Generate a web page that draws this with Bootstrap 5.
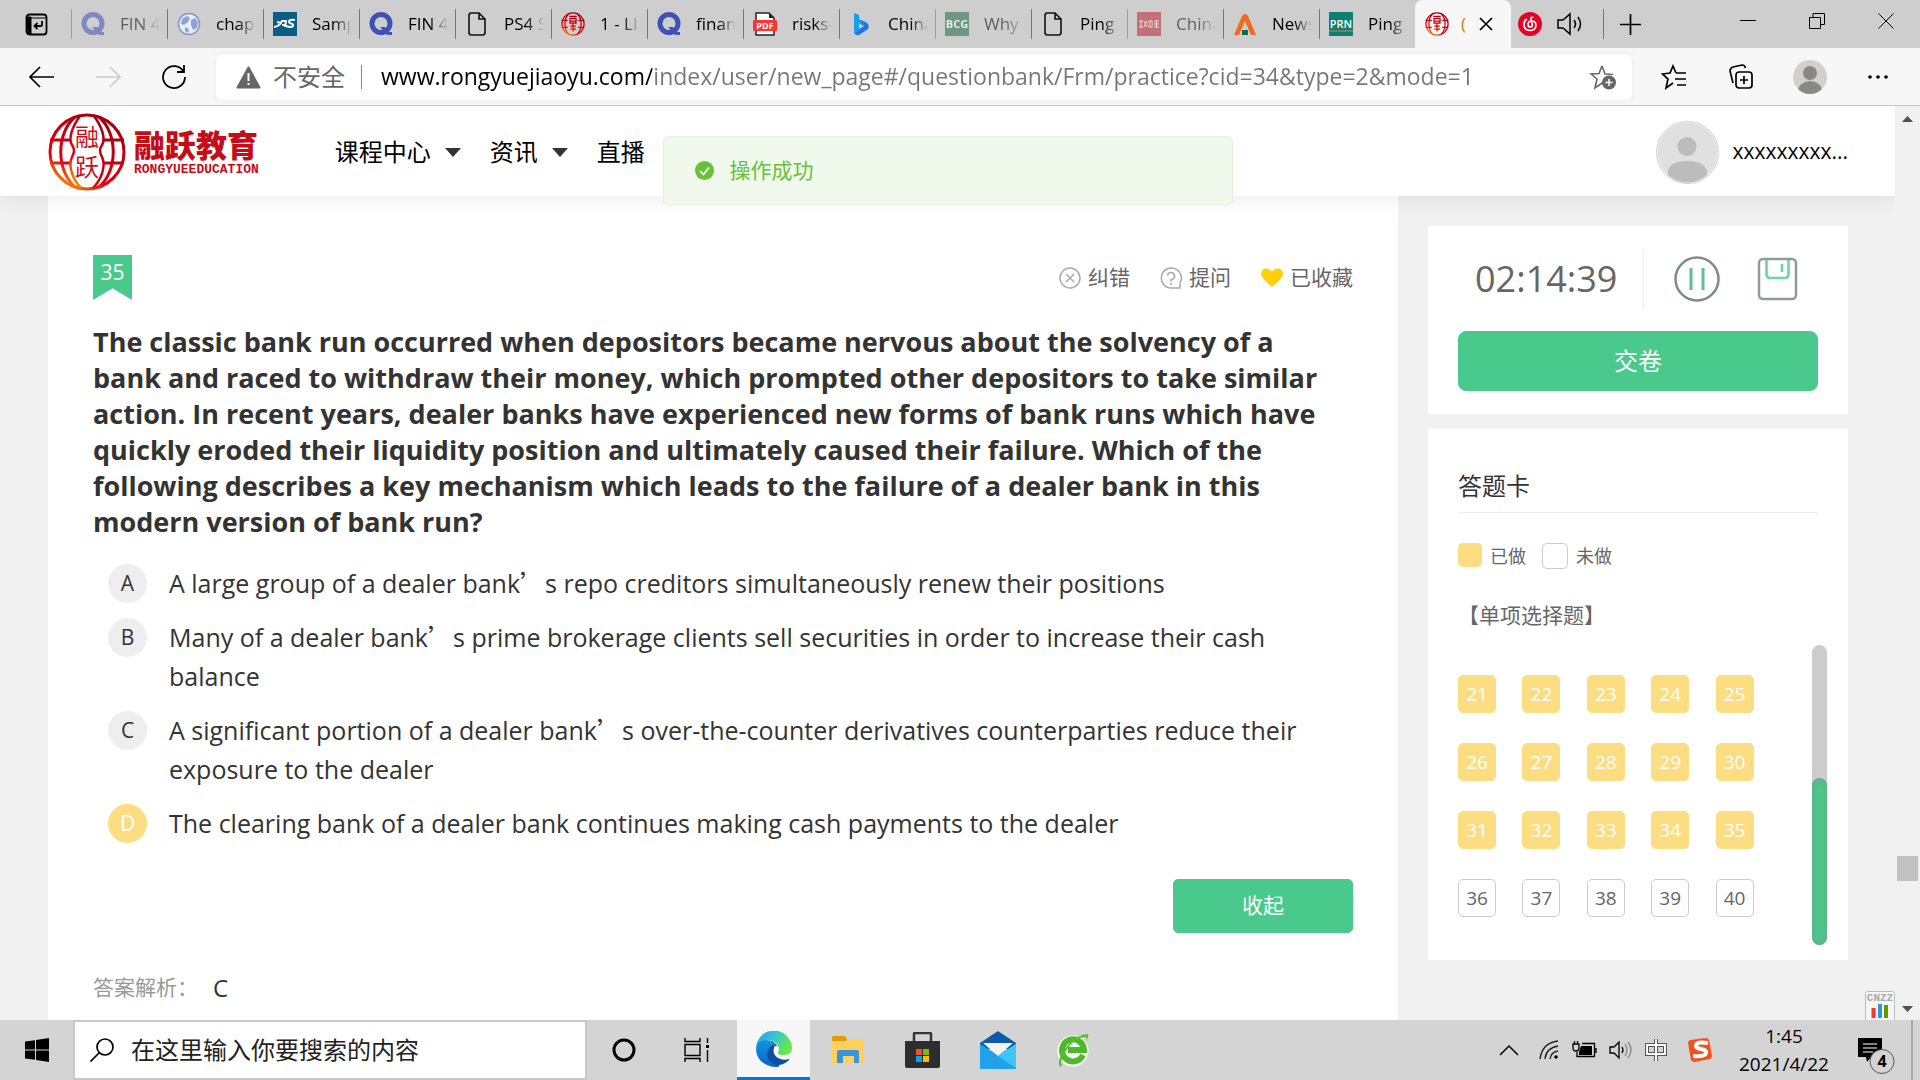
<!DOCTYPE html>
<html lang="zh-CN">
<head>
<meta charset="utf-8">
<meta name="viewport" content="width=device-width, initial-scale=1">
<title>融跃教育</title>
<link href="https://cdn.jsdelivr.net/npm/bootstrap@5.3.0/dist/css/bootstrap.min.css" rel="stylesheet">
<script src="https://cdn.jsdelivr.net/npm/bootstrap@5.3.0/dist/js/bootstrap.bundle.min.js"></script>
<style>
:root{--green:#49c98b;--yellow:#fcdd82;--ink:#333;--soft:#666}
body{font-family:"Open Sans","Noto Sans CJK SC",sans-serif;color:var(--ink);background:#f1f1f1;line-height:1.5}
a{color:inherit;text-decoration:none}
svg{display:block;flex:none}
.plain{background:none;border:0;padding:0;color:inherit;display:flex;align-items:center;justify-content:center}
/* browser chrome */
.tabstrip{height:48px;background:#cecece;color:#000;font-size:17px}
.tab-menu{width:71px;padding-left:25px}
.tab-item{width:96px;height:48px;padding-left:10px;gap:15px;position:relative;white-space:nowrap}
.tab-item::before{content:"";position:absolute;left:0;top:9px;width:1px;height:30px;background:#777}
.tab-title{width:40px;overflow:hidden;-webkit-mask-image:linear-gradient(90deg,#000 55%,transparent);mask-image:linear-gradient(90deg,#000 55%,transparent)}
.tab-item.dim{opacity:.55}
.tab-item.current{background:#f7f7f7;border-radius:8px 8px 0 0;gap:12px}
.tab-item.current::before,.tab-item.bare::before{display:none}
.tab-item.current .tab-title{width:6px;color:#c48200;-webkit-mask-image:none;mask-image:none}
.tab-item.bare{width:92px;padding-left:7px}
.new-tab{width:53px;height:30px;border-left:1px solid #777}
.win-btn{width:69px;height:42px}
.toolbar{height:58px;background:#f7f7f7;border-bottom:1px solid #c8c8c8;padding-left:27px;color:#000}
.nav-btn{width:66px;justify-content:flex-start}
.nav-btn.reload{width:57px}
.address{height:46px;background:#fff;border-radius:6px;box-shadow:0 0 6px rgba(0,0,0,.06);padding:0 15px 0 20px;font-size:24px;color:#666}
.address-sep{width:1px;height:24px;background:#888;margin:0 19px 0 16px}
.address input{border:0;outline:0;padding:0;font-size:23px;color:#000;background:linear-gradient(90deg,#000 271px,#767676 271px);-webkit-background-clip:text;background-clip:text;-webkit-text-fill-color:transparent}
.tools{width:288px;padding:0 31px 0 28px}
/* site */
.viewport{min-height:0;overflow:hidden}
.site-head{height:90px;background:#fff;box-shadow:0 4px 20px rgba(0,0,0,.07);padding:2px 47px 0 48px;z-index:2;color:#000}
.brand-name{font:900 31px/31px "Noto Sans CJK SC",sans-serif;color:#c60c18;margin-bottom:4px}
.brand-sub{font:bold 13px/13px "Liberation Mono",monospace;color:#c60c18}
.menu{font-size:24px;gap:29px;margin-left:76px}
.menu a{gap:14px}
.user-link{font-size:21px;gap:14px}
.site-body{padding:0 47px 0 48px}
.paper{background:#fff}
.question{padding:59px 45px 0}
.ribbon{width:39px;height:45px;background:var(--green);color:#fff;font-size:21px;line-height:34px;text-align:center;clip-path:polygon(0 0,100% 0,100% 100%,50% 74%,0 100%)}
.acts{gap:30px;font-size:21px;color:var(--soft)}
.acts button{gap:7px;line-height:45px}
.stem{font-size:27px;line-height:36px;font-weight:700;margin:24px 0 24px}
.choice{padding-left:15px;margin-bottom:15px;gap:22px;font-size:25px;line-height:39px;cursor:pointer}
.letter{width:39px;height:39px;border-radius:50%;background:#eee;font-size:21px;text-align:center;flex:none}
.btn-check:checked+.choice .letter{background:var(--yellow);color:#fff}
.apos{font-family:"Noto Sans CJK SC",sans-serif;line-height:24px}
.btn-go{--bs-btn-bg:var(--green);--bs-btn-color:#fff;--bs-btn-border-color:var(--green);--bs-btn-hover-bg:#3dbb7e;--bs-btn-hover-color:#fff;--bs-btn-padding-y:0}
.fold{width:180px;height:54px;font-size:21px;border-radius:5px;margin-top:21px}
.answer{margin-top:37px;font-size:21px;color:#999;gap:15px}
.answer b{font-weight:400;font-size:24px;color:var(--ink)}
.side{width:420px;margin-left:30px;padding-top:30px;gap:15px}
.timer-card{padding:23px 30px}
.clock{width:186px;height:60px;border-right:1px solid #eee;font-size:36px;line-height:60px;color:var(--soft);padding-left:17px;margin-right:30px}
.timer-tools{gap:37px}
.submit{height:60px;font-size:24px;border-radius:8px;margin-top:22px}
.sheet{padding:45px 30px 15px}
.sheet h2{font-size:24px;line-height:24px;font-weight:400;padding-bottom:14px;border-bottom:1px solid #eee;margin:0 0 30px}
.legend-row{font-size:18px;line-height:26px;color:var(--soft)}
.swatch{width:26px;height:26px;border-radius:5px;border:1px solid #ccc}
.swatch.done{width:24px;height:24px;background:var(--yellow);border:0}
.kind{font-size:21px;line-height:30px;color:var(--soft);margin:31px 0 15px}
.scroller{height:300px;margin-right:-9px}
.cells{display:grid;grid-template-columns:repeat(5,1fr);row-gap:30px;padding:30px 32px 0 0;align-content:start}
.cell{width:38px;height:38px;border-radius:5px;border:1px solid #ccc;background:#fff;color:var(--soft);font-size:19px;line-height:34px;padding:0}
.cell.done{background:var(--yellow);border-color:var(--yellow);color:#fff}
.track{width:15px;border-radius:8px;background:#ccc;padding-top:133px}
.track div{height:100%;border-radius:8px;background:var(--green);box-shadow:inset 0 0 8px rgba(130,150,140,.8)}
.toast-ok{top:30px;left:50%;transform:translateX(-50%);width:570px;height:69px;background:#f0f9eb;border:1px solid #e1f3d8;border-radius:6px;color:#67c23a;font-size:21px;padding-left:31px;gap:16px;z-index:5}
.cnzz{right:0;bottom:0}
.page-scroll{width:25px;background:#f1f1f1;padding:9px 2px 7px}
.thumb-slot{height:149px}
.page-thumb{height:25px;background:#c1c1c1}
/* taskbar */
.taskbar{height:60px;background:#d4d4d4;color:#000}
.start{width:73px}
.search-box{width:514px;background:#fff;border:2px solid #c9c9c9;padding-left:15px;gap:17px}
.search-box input{border:0;outline:0;font-size:24px;padding:0;width:400px;color:#222}
.search-box input::placeholder{color:#222;opacity:1}
.task{width:75px;height:60px}
.task.slim{width:73px}
.task.open{background:#f7f7f7;border-bottom:3px solid #0078d7;width:73px}
.tray{gap:12px}
.date{font-size:19px;line-height:28px;width:92px;margin-left:13px;text-align:center}
.show-desk{width:9px;height:60px;border-left:2px solid #aaa}
</style>
</head>
<body class="vh-100 d-flex flex-column overflow-hidden">
<svg width="0" height="0" class="position-absolute" aria-hidden="true">
  <defs>
    <linearGradient id="fire" x1="0" y1="1" x2=".6" y2="0"><stop offset="0" stop-color="#fc0"/><stop offset=".35" stop-color="#e60012"/><stop offset="1" stop-color="#a40010"/></linearGradient>
    <linearGradient id="bingG" x1="0" y1="0" x2="1" y2="1"><stop offset="0" stop-color="#1aa0f0"/><stop offset="1" stop-color="#1d5ee0"/></linearGradient>
    <linearGradient id="eA" x1="0" y1="0" x2="1" y2=".4"><stop offset="0" stop-color="#1fa7e4"/><stop offset=".5" stop-color="#33c3d5"/><stop offset="1" stop-color="#66e84a"/></linearGradient>
    <linearGradient id="eB" x1="0" y1="0" x2="0" y2="1"><stop offset="0" stop-color="#1296dd"/><stop offset="1" stop-color="#0a63c8"/></linearGradient>
  </defs>
  <symbol id="globe" viewBox="0 0 78 78">
    <g fill="none" stroke="url(#fire)" stroke-width="3">
      <circle cx="39" cy="39" r="37"/><path d="M27 4C8 20 8 58 27 74M51 4c19 16 19 54 0 70M2 27h20M2 50h20M56 27h20M56 50h20"/>
      <path d="M32 3C24 14 20 26 24 32q4 5 0 12c-4 8 0 22 9 31M46 3c8 11 12 23 8 29q-4 5 0 12c4 8 0 22-9 31" stroke-width="2.500"/>
    </g>
    <g fill="#c8101a" font-family="Noto Sans CJK SC" font-size="24" text-anchor="middle"><text x="39" y="33">融</text><text x="39" y="63">跃</text></g>
  </symbol>
  <symbol id="globe-s" viewBox="0 0 78 78">
    <g fill="none" stroke="url(#fire)" stroke-width="4">
      <circle cx="39" cy="39" r="36"/><path d="M27 4C8 20 8 58 27 74M51 4c19 16 19 54 0 70M2 27h20M2 50h20M56 27h20M56 50h20"/>
      <path d="M27 14h24M29 21h20v9H29zM27 36h24M39 36v28M30 46h18M29 56h20M30 30v8M48 30v8"/>
    </g>
  </symbol>
  <symbol id="quest" viewBox="0 0 24 24"><circle cx="12" cy="11.500" r="9" fill="none" stroke="#3f51b5" stroke-width="5"/><path d="M11 15h5l3 5h4v3h-5z" fill="#3f51b5"/></symbol>
  <symbol id="page" viewBox="0 0 24 24"><path d="M4 3.500Q4 1 6.500 1H14l6 6v13.500q0 2.500-2.500 2.500h-11Q4 23 4 20.500zM14 1v6h6" fill="none" stroke="#111" stroke-width="1.600"/></symbol>
</svg>

<header class="tabstrip d-flex align-items-center">
  <div class="tab-menu"><button class="plain" aria-label="标签页"><svg width="23" height="23" viewBox="0 0 23 23"><rect x="1.500" y="1.500" width="20" height="20" rx="3" fill="none" stroke="#000" stroke-width="1.800"/><path d="M1.500 5h20M2 4h4v17H3z" fill="#000" stroke="#000"/><path d="M17 8v4q0 1-1 1h-6M12.500 10L9.500 13l3 3" fill="none" stroke="#000" stroke-width="1.800"/></svg></button></div>
  <a href="#" class="tab-item d-flex align-items-center dim"><svg width="24" height="24"><use href="#quest"/></svg><span class="tab-title">FIN 4</span></a>
  <a href="#" class="tab-item d-flex align-items-center"><svg width="24" height="24"><circle cx="12" cy="12" r="10.500" fill="#e8edf8" stroke="#8497c9" stroke-width="1.500"/><path d="M5 7l5-3 3 2-2 4-4 3-3-1zM14 8l4-2 3 4-1 6-4 2-2-5zM8 15l4 2-1 4-3-2z" fill="#8da3d6"/></svg><span class="tab-title">chap4</span></a>
  <a href="#" class="tab-item d-flex align-items-center"><svg width="24" height="24"><path d="M0 0h24v24H0z" fill="#0b5d86"/><path d="M1 15q6-1 8-6h4l-1 6M9 13h4M22 8q-6-1-6 2c0 2 5 1 4 4q-2 2-7 0M4 10l4 1" fill="none" stroke="#fff" stroke-width="2"/></svg><span class="tab-title">Samp</span></a>
  <a href="#" class="tab-item d-flex align-items-center"><svg width="24" height="24"><use href="#quest"/></svg><span class="tab-title">FIN 4</span></a>
  <a href="#" class="tab-item d-flex align-items-center"><svg width="24" height="24"><use href="#page"/></svg><span class="tab-title">PS4 S</span></a>
  <a href="#" class="tab-item d-flex align-items-center"><svg width="24" height="24"><use href="#globe-s"/></svg><span class="tab-title">1 - LI</span></a>
  <a href="#" class="tab-item d-flex align-items-center"><svg width="24" height="24"><use href="#quest"/></svg><span class="tab-title">finan</span></a>
  <a href="#" class="tab-item d-flex align-items-center"><svg width="24" height="24"><path d="M3 1h13l5 5v17H3z" fill="#fff" stroke="#222" stroke-width="1.500"/><path d="M16 1v5h5z" fill="#222"/><rect x="0" y="8" width="24" height="11" rx="1" fill="#f33"/><text x="12" y="17" font-size="9" font-weight="700" fill="#fff" text-anchor="middle">PDF</text></svg><span class="tab-title">risks-</span></a>
  <a href="#" class="tab-item d-flex align-items-center"><svg width="24" height="24"><path d="M5 1l5 2v14l-5 4z" fill="#1b9df0"/><path d="M5 21l5-4 5-3-4-2-2-5 8 3q4 3 2 7l-9 6q-3 1-5-2z" fill="url(#bingG)"/></svg><span class="tab-title">China</span></a>
  <a href="#" class="tab-item d-flex align-items-center dim"><svg width="24" height="24"><path d="M0 0h24v24H0z" fill="#1f6b4b"/><text x="12" y="16" font-size="11" font-weight="700" fill="#fff" text-anchor="middle">BCG</text></svg><span class="tab-title">Why</span></a>
  <a href="#" class="tab-item d-flex align-items-center"><svg width="24" height="24"><use href="#page"/></svg><span class="tab-title">Ping</span></a>
  <a href="#" class="tab-item d-flex align-items-center dim"><svg width="24" height="24"><path d="M0 0h24v24H0z" fill="#c0232c"/><path d="M2 9h4M4 9v6M2 15h4M7 9l3 6M10 9l-3 6M12 9v6h3V9zM17 9h5M17 12h5M19.500 9v6M17 15h5" fill="none" stroke="#fff"/></svg><span class="tab-title">China</span></a>
  <a href="#" class="tab-item d-flex align-items-center"><svg width="24" height="24"><path d="M1 23L9 4q3-4 6 0l8 19h-5L12 9 6 23z" fill="#f26a1b"/><path d="M9 18h6v5H9z" fill="#0d6b4c"/></svg><span class="tab-title">News</span></a>
  <a href="#" class="tab-item d-flex align-items-center"><svg width="24" height="24"><path d="M0 0h24v24H0z" fill="#0d8074"/><text x="12" y="16" font-size="11" font-weight="600" fill="#fff" text-anchor="middle">PRN</text><path d="M0 19h24" stroke="#e67a43"/></svg><span class="tab-title">Ping</span></a>
  <a href="#" class="tab-item current d-flex align-items-center"><svg width="24" height="24"><use href="#globe-s"/></svg><span class="tab-title">(</span><svg width="14" height="14"><path d="M1 1l12 12M13 1L1 13" stroke="#000" stroke-width="1.700"/></svg></a>
  <a href="#" class="tab-item bare d-flex align-items-center"><svg width="24" height="24"><circle cx="12" cy="12" r="12" fill="#e60026"/><path d="M15.500 5.500q-3-1-2.500 2l1.300 5.500q.2 2-1.800 2-2.500 0-2.500-2.500Q10 9 13.500 9q4.500 0 4.500 4.500-.5 5-6 5Q6 18 6 12.500 6 8.500 9 7" fill="none" stroke="#fff" stroke-width="1.700"/></svg><svg width="26" height="24"><path d="M1 8h5l7-6v20l-7-6H1z" fill="none" stroke="#000" stroke-width="1.500"/><path d="M17 8q3 4 0 8M21 5q5 7 0 14" fill="none" stroke="#000" stroke-width="1.500"/></svg></a>
  <button class="plain new-tab" aria-label="新建标签页"><svg width="21" height="21"><path d="M10.500 0v21M0 10.500h21" stroke="#000" stroke-width="1.700"/></svg></button>
  <div class="d-flex ms-auto align-self-start">
    <button class="plain win-btn" aria-label="最小化"><svg width="16" height="16"><path d="M0 7.500h16" stroke="#000"/></svg></button>
    <button class="plain win-btn" aria-label="还原"><svg width="16" height="16"><path d="M.5 4.500h11v11H.5zM4 4.500V.5h11.500v11H12" fill="none" stroke="#000"/></svg></button>
    <button class="plain win-btn" aria-label="关闭"><svg width="16" height="16"><path d="M.5.5l15 15M15.500.5l-15 15" stroke="#000"/></svg></button>
  </div>
</header>

<div class="toolbar d-flex align-items-center">
  <button class="plain nav-btn" aria-label="后退"><svg width="28" height="24"><path d="M27 12H3M13 2L3 12l10 10" fill="none" stroke="#000" stroke-width="1.700"/></svg></button>
  <button class="plain nav-btn" aria-label="前进"><svg width="28" height="24"><path d="M3 12h24M17 2l10 10-10 10" fill="none" stroke="#ccc" stroke-width="1.700"/></svg></button>
  <button class="plain nav-btn reload" aria-label="刷新"><svg width="30" height="26"><path d="M24.500 7.500A11 11 0 1 0 26 13M25 1v7h-7" fill="none" stroke="#000" stroke-width="1.800"/></svg></button>
  <div class="address d-flex align-items-center flex-fill">
    <svg width="25" height="24" class="me-2"><path d="M12.500 2.500l11 20h-22z" fill="#666" stroke="#666" stroke-width="2" stroke-linejoin="round"/><path d="M12.500 8v8M12.500 18v2" stroke="#fff" stroke-width="2"/></svg>
    <label for="url" class="ms-1">不安全</label><span class="address-sep"></span>
    <input id="url" type="text" class="flex-fill" value="www.rongyuejiaoyu.com/index/user/new_page#/questionbank/Frm/practice?cid=34&amp;type=2&amp;mode=1">
    <button class="plain" aria-label="收藏此页"><svg width="28" height="26"><path d="M13 2l3 8 8 .5M17 22l-4-3-7 5 2-9-6-5 8-.5 3-7.500" fill="none" stroke="#666" stroke-width="1.600"/><circle cx="20" cy="18.500" r="7" fill="#666"/><path d="M20 15v7M16.500 18.500h7" stroke="#fff" stroke-width="1.500"/></svg></button>
  </div>
  <div class="tools d-flex align-items-center justify-content-between">
    <button class="plain" aria-label="收藏夹"><svg width="28" height="26"><path d="M16 9l-3-7-3 7-7.500 1 5.500 5-2 9 7-5M16 9h10M15 15h11M17 21h9" fill="none" stroke="#000" stroke-width="1.700"/></svg></button>
    <button class="plain" aria-label="集锦"><svg width="26" height="26"><rect x="8" y="8" width="16" height="16" rx="3" fill="none" stroke="#000" stroke-width="1.700"/><path d="M16 12v8M12 16h8M5 19L2 7q0-3 3-4l9-2q3 0 3.500 3" fill="none" stroke="#000" stroke-width="1.700"/></svg></button>
    <button class="plain" aria-label="用户"><svg width="34" height="34"><clipPath id="uc"><circle cx="17" cy="17" r="17"/></clipPath><g clip-path="url(#uc)"><path d="M0 0h34v34H0z" fill="#d2d0ce"/><circle cx="17" cy="13" r="7" fill="#8a8886"/><ellipse cx="17" cy="31" rx="12" ry="10" fill="#8a8886"/></g></svg></button>
    <button class="plain" aria-label="更多"><svg width="22" height="6"><circle cx="3" cy="3" r="1.800"/><circle cx="11" cy="3" r="1.800"/><circle cx="19" cy="3" r="1.800"/></svg></button>
  </div>
</div>

<div class="viewport d-flex flex-fill">
  <div class="flex-fill position-relative d-flex flex-column overflow-hidden">
    <nav class="site-head d-flex align-items-center flex-shrink-0 position-relative">
      <a href="#" class="d-flex align-items-center"><svg width="78" height="78"><use href="#globe"/></svg>
        <span class="ms-2 d-flex flex-column"><span class="brand-name">融跃教育</span><span class="brand-sub">RONGYUEEDUCATION</span></span></a>
      <div class="menu d-flex">
        <a href="#" class="d-flex align-items-center">课程中心<svg width="16" height="9"><path d="M0 0h16L8 9z" fill="#333"/></svg></a>
        <a href="#" class="d-flex align-items-center">资讯<svg width="16" height="9"><path d="M0 0h16L8 9z" fill="#333"/></svg></a>
        <a href="#">直播</a>
      </div>
      <a href="#" class="user-link d-flex align-items-center ms-auto"><svg width="63" height="63"><circle cx="31.500" cy="31.500" r="31" fill="#fff" stroke="#ccc"/><clipPath id="av"><circle cx="31.500" cy="31.500" r="30"/></clipPath><g clip-path="url(#av)"><path d="M0 0h63v63H0z" fill="#e0e0e0"/><circle cx="31" cy="25.500" r="9.500" fill="#bcbcbc"/><path d="M12 63V50q2-10 19-10t20 10v13z" fill="#bcbcbc"/></g></svg>xxxxxxxxx...</a>
    </nav>
    <main class="site-body d-flex flex-fill align-items-stretch">
      <section class="question paper flex-fill">
        <div class="d-flex justify-content-between align-items-start">
          <div class="ribbon">35</div>
          <div class="acts d-flex">
            <button class="plain"><svg width="22" height="22"><circle cx="11" cy="11" r="10" fill="none" stroke="#aaa" stroke-width="1.500"/><path d="M7 7l8 8M15 7l-8 8" stroke="#aaa" stroke-width="1.500"/></svg>纠错</button>
            <button class="plain"><svg width="22" height="22"><path d="M20 21h-9A10 10 0 1 1 20 16z" fill="none" stroke="#aaa" stroke-width="1.500"/><path d="M7.500 8.500Q8 5.500 11 5.500t3.500 3-3.500 4.500v1.500M11 16v2" fill="none" stroke="#aaa" stroke-width="1.700"/></svg>提问</button>
            <button class="plain"><svg width="22" height="22"><path d="M11 20Q0 11 0 7q0-5 5-5.500 4 0 6 3.500 2-3.500 6-3.500Q22 2 22 7q0 4-11 13z" fill="#fecf0a"/></svg>已收藏</button>
          </div>
        </div>
        <h1 class="stem">The classic bank run occurred when depositors became nervous about the solvency of a<br>bank and raced to withdraw their money, which prompted other depositors to take similar<br>action. In recent years, dealer banks have experienced new forms of bank runs which have<br>quickly eroded their liquidity position and ultimately caused their failure. Which of the<br>following describes a key mechanism which leads to the failure of a dealer bank in this<br>modern version of bank run?</h1>
        <input class="btn-check" type="radio" name="q35" id="oa"><label class="choice d-flex" for="oa"><span class="letter">A</span><span>A large group of a dealer bank<span class="apos">’</span>s repo creditors simultaneously renew their positions</span></label>
        <input class="btn-check" type="radio" name="q35" id="ob"><label class="choice d-flex" for="ob"><span class="letter">B</span><span>Many of a dealer bank<span class="apos">’</span>s prime brokerage clients sell securities in order to increase their cash<br>balance</span></label>
        <input class="btn-check" type="radio" name="q35" id="oc"><label class="choice d-flex" for="oc"><span class="letter">C</span><span>A significant portion of a dealer bank<span class="apos">’</span>s over-the-counter derivatives counterparties reduce their<br>exposure to the dealer</span></label>
        <input class="btn-check" type="radio" name="q35" id="od" checked><label class="choice d-flex" for="od"><span class="letter">D</span><span>The clearing bank of a dealer bank continues making cash payments to the dealer</span></label>
        <div class="text-end"><button class="btn btn-go fold">收起</button></div>
        <div class="answer d-flex align-items-center"><span>答案解析：</span><b>C</b></div>
      </section>
      <aside class="side d-flex flex-column flex-shrink-0">
        <div class="timer-card paper">
          <div class="d-flex align-items-center"><div class="clock">02:14:39</div>
            <div class="timer-tools d-flex align-items-center">
            <button class="plain" aria-label="暂停"><svg width="46" height="46"><circle cx="23" cy="23" r="21.500" fill="none" stroke="#7f8c86" stroke-width="2.500"/><path d="M17 12v22M29 12v22" stroke="#5cc092" stroke-width="3"/></svg></button>
            <button class="plain" aria-label="保存"><svg width="41" height="44"><rect x="2" y="2" width="37" height="40" rx="4" fill="none" stroke="#8e9c96" stroke-width="2.500"/><path d="M9.500 3v14q0 4 4 4h14q4 0 4-4V3M25 7v8" fill="none" stroke="#6fd3a4" stroke-width="2.600"/></svg></button>
            </div>
          </div>
          <button class="btn btn-go submit w-100">交卷</button>
        </div>
        <div class="sheet paper">
          <h2>答题卡</h2>
          <div class="legend-row d-flex align-items-start"><span class="swatch done"></span><span class="ms-2 me-3">已做</span><span class="swatch"></span><span class="ms-2">未做</span></div>
          <div class="kind">【单项选择题】</div>
          <div class="scroller d-flex">
            <div class="cells flex-fill">
              <button class="cell done">21</button><button class="cell done">22</button><button class="cell done">23</button><button class="cell done">24</button><button class="cell done">25</button>
              <button class="cell done">26</button><button class="cell done">27</button><button class="cell done">28</button><button class="cell done">29</button><button class="cell done">30</button>
              <button class="cell done">31</button><button class="cell done">32</button><button class="cell done">33</button><button class="cell done">34</button><button class="cell done">35</button>
              <button class="cell">36</button><button class="cell">37</button><button class="cell">38</button><button class="cell">39</button><button class="cell">40</button>
            </div>
            <div class="track"><div></div></div>
          </div>
        </div>
      </aside>
    </main>
    <div class="toast-ok position-absolute d-flex align-items-center" role="alert"><svg width="19" height="19"><circle cx="9.500" cy="9.500" r="9.500" fill="#67c23a"/><path d="M5 10l3.500 3.500L14 6.500" fill="none" stroke="#fff" stroke-width="1.700"/></svg>操作成功</div>
    <svg class="cnzz position-absolute" width="30" height="29"><rect x=".5" y=".5" width="29" height="32" rx="2" fill="#f5f5f5" stroke="#bbb"/><text x="15" y="10" font-size="11" font-family="Liberation Mono" font-weight="700" fill="#aaa" text-anchor="middle">CNZZ</text><path d="M8.500 27V17" stroke="#f33" stroke-width="4"/><path d="M15 27V13" stroke="#39c" stroke-width="4"/><path d="M21 27V14" stroke="#690" stroke-width="4"/></svg>
  </div>
  <div class="page-scroll d-flex flex-column flex-shrink-0">
    <svg width="21" height="8"><path d="M5 7h11l-5.500-6z" fill="#505050"/></svg>
    <div class="thumb-slot mt-auto"><div class="page-thumb"></div></div>
    <svg width="21" height="8"><path d="M5 1h11l-5.500 6z" fill="#505050"/></svg>
  </div>
</div>

<footer class="taskbar d-flex align-items-center">
  <button class="plain start" aria-label="开始"><svg width="24" height="24"><path d="M0 3.500l10-1.300v9.300H0zM11 2l13-2v11.500H11zM0 12.500h10v9.300L0 20.500zM11 12.500h13V24l-13-2z"/></svg></button>
  <div class="search-box d-flex align-items-center align-self-stretch"><svg width="24" height="24"><circle cx="15" cy="9" r="8" fill="none" stroke="#000" stroke-width="1.700"/><path d="M9.500 14.500L.5 23.500" stroke="#000" stroke-width="1.700"/></svg><input type="text" aria-label="搜索" placeholder="在这里输入你要搜索的内容"></div>
  <button class="plain task slim" aria-label="Cortana"><svg width="24" height="24"><circle cx="12" cy="12" r="10" fill="none" stroke="#000" stroke-width="3"/></svg></button>
  <button class="plain task slim me-1" aria-label="任务视图"><svg width="26" height="24"><path d="M1 0v3.500h15V0M1 24v-3.500h15V24M1 6.500h15v11H1zM23.500 0v5M23.500 12v12" fill="none" stroke="#000" stroke-width="1.400"/><path d="M22 7h3v3h-3z"/></svg></button>
  <button class="plain task open" aria-label="Edge"><svg width="36" height="36" viewBox="0 0 36 36"><path d="M0 18A18 18 0 0 1 36 17q0 7-8 7-7 0-6-3 2-3 0-6-3-6-10-6Q2 9 0 18z" fill="url(#eA)"/><path d="M0 18q1-9 10-9 9 0 11 6-6-2-8 4-1 9 8 13 3 2 2 3.500Q18 37 11 34 0 29 0 18z" fill="url(#eB)"/><path d="M14 16q-6 7 0 14 8 8 18 0 2-2 1-2-6 2-11-1-6-4-4-10 0-3 3-2-3-3-7 1z" fill="#0c4f9e"/></svg></button>
  <button class="plain task" aria-label="资源管理器"><svg width="32" height="28"><path d="M0 1q0-1 1-1h12l2 3v4H0z" fill="#e09b0a"/><path d="M0 5h14l2-2h16v24H0z" fill="#ffd15c"/><path d="M5 27V16q0-2 2-2h18q2 0 2 2v11h-5v-7H11v7z" fill="#3a94dc"/></svg></button>
  <button class="plain task" aria-label="应用商店"><svg width="35" height="36"><path d="M9 10V2q0-1 1-1h15q1 0 1 1v8" fill="none" stroke="#333" stroke-width="2.500"/><path d="M0 9h35v25q0 2-2 2H2q-2 0-2-2z" fill="#2d2d2d"/><path d="M11 17h6v6h-6z" fill="#f25022"/><path d="M18 17h6v6h-6z" fill="#7fba00"/><path d="M11 24h6v6h-6z" fill="#00a4ef"/><path d="M18 24h6v6h-6z" fill="#ffb900"/></svg></button>
  <button class="plain task" aria-label="邮件"><svg width="36" height="38"><path d="M0 12L18 0l18 12v6H0z" fill="#0a5cab"/><path d="M0 13l18 11 18-11v25H0z" fill="#22a2ea"/><path d="M18 25l18-12v24z" fill="#3cc8f4"/><path d="M3 12h30L18 25z" fill="#f3f3f3"/></svg></button>
  <button class="plain task" aria-label="浏览器"><svg width="34" height="36"><circle cx="17" cy="19" r="15.500" fill="#fff"/><path d="M27 23a11 11 0 1 1 1-5H12" fill="none" stroke="#4db82a" stroke-width="6"/><path d="M4 35Q0 28 11 14 22 2 32 2q1 2-2 7 1-4-1-4Q20 5 12 16 3 28 6 34z" fill="#54c02a"/></svg></button>
  <div class="tray d-flex align-items-center ms-auto">
    <svg width="20" height="12"><path d="M1 11l9-9 9 9" fill="none" stroke="#000" stroke-width="1.500"/></svg>
    <svg width="29" height="22" viewBox="-8 0 29 22"><path d="M1 20Q3 4 19 2M6 20Q7 9 19 7M11 20q1-7 8-8" fill="none" stroke="#222" stroke-width="1.400"/><circle cx="17" cy="18" r="1.800"/></svg>
    <svg width="25" height="18"><path d="M9 5h11v9H7v-3z"/><path d="M10 2.500h12.500v13H5V11M1 3h6v4q0 3-3 3t-3-3zM2.500 0v3M5.500 0v3M24 7v5" fill="none" stroke="#000" stroke-width="1.300"/></svg>
    <svg width="24" height="20"><path d="M1 7h4l5-5v16l-5-5H1z" fill="none" stroke="#000" stroke-width="1.300"/><path d="M13 7q2 3 0 6" fill="none" stroke="#000" stroke-width="1.300"/><path d="M16 4q4 6 0 12M19 2q6 8 0 16" fill="none" stroke="#888" stroke-width="1.300"/></svg>
    <svg width="22" height="24"><g fill="none"><path d="M2 7h18v9H2zM11 1v22" stroke="#555" stroke-width="4"/><path d="M2 7h18v9H2zM11 1v22" stroke="#fff" stroke-width="2"/></g></svg>
    <svg width="34" height="24" viewBox="-9 0 34 24"><path d="M0 5q0-2 2-3L18 0q2 0 3 2l3 16q0 2-2 3L6 24q-2 0-3-2z" fill="#f4511e"/><path d="M20 5q-12-2-12 3 0 2 5 3 6 1 5 4-1 4-13 3" fill="none" stroke="#fff" stroke-width="4"/></svg>
    <div class="date"><div>1:45</div><div>2021/4/22</div></div>
    <svg width="37" height="48" viewBox="0 -12 37 48" class="ms-3"><path d="M0 0h24v19H13l-4 5-1-5H0z"/><path d="M5 6h14M5 10h14M5 14h10" stroke="#fff" stroke-width="1.200"/><circle cx="24" cy="23.500" r="12" fill="#d4d4d4" stroke="#555"/><text x="24" y="29" font-size="16" font-weight="700" text-anchor="middle">4</text></svg>
    <div class="show-desk ms-1"></div>
  </div>
</footer>
</body>
</html>
